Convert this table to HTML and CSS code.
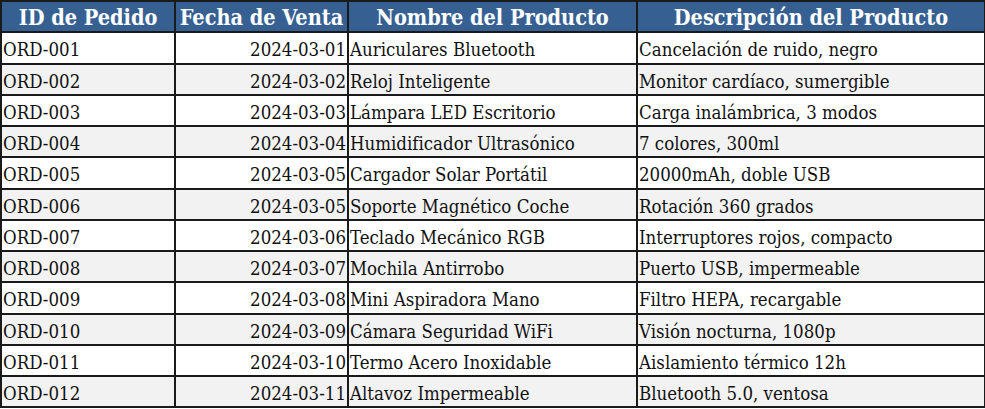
FILE: index.html
```html
<!DOCTYPE html>
<html lang="es">
<head>
<meta charset="utf-8">
<link rel="stylesheet" href="styles.css">
</head>
<body>
<table class="sheet">
  <colgroup>
    <col class="c1"><col class="c2"><col class="c3"><col class="c4">
  </colgroup>
  <thead>
    <tr><th>ID de Pedido</th><th>Fecha de Venta</th><th>Nombre del Producto</th><th>Descripción del Producto</th></tr>
  </thead>
  <tbody>
    <tr><td>ORD-001</td><td class="num">2024-03-01</td><td>Auriculares Bluetooth</td><td>Cancelación de ruido, negro</td></tr>
    <tr><td>ORD-002</td><td class="num">2024-03-02</td><td>Reloj Inteligente</td><td>Monitor cardíaco, sumergible</td></tr>
    <tr><td>ORD-003</td><td class="num">2024-03-03</td><td>Lámpara LED Escritorio</td><td>Carga inalámbrica, 3 modos</td></tr>
    <tr><td>ORD-004</td><td class="num">2024-03-04</td><td>Humidificador Ultrasónico</td><td>7 colores, 300ml</td></tr>
    <tr><td>ORD-005</td><td class="num">2024-03-05</td><td>Cargador Solar Portátil</td><td>20000mAh, doble USB</td></tr>
    <tr><td>ORD-006</td><td class="num">2024-03-05</td><td>Soporte Magnético Coche</td><td>Rotación 360 grados</td></tr>
    <tr><td>ORD-007</td><td class="num">2024-03-06</td><td>Teclado Mecánico RGB</td><td>Interruptores rojos, compacto</td></tr>
    <tr><td>ORD-008</td><td class="num">2024-03-07</td><td>Mochila Antirrobo</td><td>Puerto USB, impermeable</td></tr>
    <tr><td>ORD-009</td><td class="num">2024-03-08</td><td>Mini Aspiradora Mano</td><td>Filtro HEPA, recargable</td></tr>
    <tr><td>ORD-010</td><td class="num">2024-03-09</td><td>Cámara Seguridad WiFi</td><td>Visión nocturna, 1080p</td></tr>
    <tr><td>ORD-011</td><td class="num">2024-03-10</td><td>Termo Acero Inoxidable</td><td>Aislamiento térmico 12h</td></tr>
    <tr><td>ORD-012</td><td class="num">2024-03-11</td><td>Altavoz Impermeable</td><td>Bluetooth 5.0, ventosa</td></tr>
  </tbody>
</table>
</body>
</html>
```
FILE: styles.css
```css
html, body {
  margin: 0;
  padding: 0;
  background: #ffffff;
}
.sheet {
  border-collapse: collapse;
  table-layout: fixed;
  width: 984px;
  font-family: "DejaVu Serif Condensed", "DejaVu Serif", serif;
  font-size: 18.5px;
  color: #111;
}
.c1 { width: 174px; }
.c2 { width: 173px; }
.c3 { width: 289px; }
.c4 { width: 348px; }
.sheet th, .sheet td {
  border: 2px solid #1a1a1a;
  height: 31.25px;
  padding: 5px 1px 0;
  white-space: nowrap;
  overflow: hidden;
  line-height: 22px;
  box-sizing: border-box;
}
.sheet th {
  background: #366092;
  color: #ffffff;
  font-weight: bold;
  font-size: 21.5px;
  text-align: center;
  padding-top: 3px;
}
.sheet td { text-align: left; }
.sheet td.num { text-align: right; }
.sheet tbody tr:nth-child(even) td { background: #f2f2f2; }
```
